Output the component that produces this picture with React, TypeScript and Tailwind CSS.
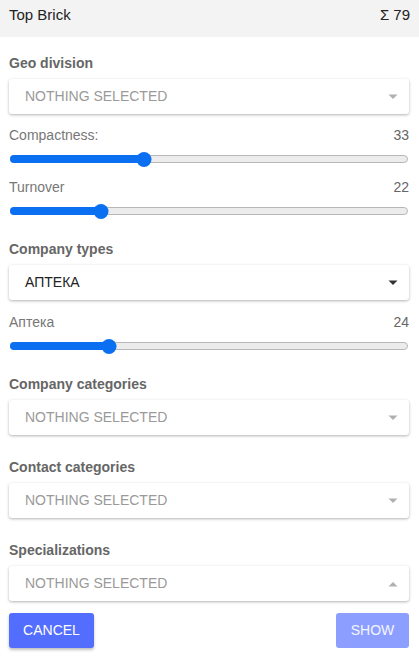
import React from "react";

const font = { fontFamily: '"Liberation Sans", Arial, sans-serif' };

function Arrow({ up = false, dark = false }: { up?: boolean; dark?: boolean }) {
  return (
    <svg width="10" height="6" viewBox="0 0 10 6" className="shrink-0">
      {up ? (
        <path d="M0.5 5.5 L5 1 L9.5 5.5 Z" fill={dark ? "#333" : "#b0b0b0"} />
      ) : (
        <path d="M0.5 0.5 L9.5 0.5 L5 5 Z" fill={dark ? "#333" : "#b0b0b0"} />
      )}
    </svg>
  );
}

function Select({ value, up = false }: { value?: string; up?: boolean }) {
  return (
    <div className="mt-[8px] h-[35px] bg-white rounded-[3px] shadow-[0_1px_3px_rgba(0,0,0,0.3)] flex items-center justify-between pl-[16px] pr-[11px]">
      {value ? (
        <span className="text-[14px] text-[#222]">{value}</span>
      ) : (
        <span className="text-[14px] text-[#9a9a9a]">NOTHING SELECTED</span>
      )}
      <Arrow up={up} dark={!!value} />
    </div>
  );
}

function Label({ text, mt }: { text: string; mt: string }) {
  return <div className={`${mt} text-[14px] leading-[16px] font-bold text-[#666]`}>{text}</div>;
}

function Slider({ label, value, mt }: { label: string; value: number; mt: string }) {
  const pos = `calc(8px + (100% - 16px) * ${value / 100})`;
  return (
    <div className={mt}>
      <div className="flex justify-between text-[14px] leading-[16px] text-[#777]">
        <span>{label}</span>
        <span className="text-[#666]">{value}</span>
      </div>
      <div className="mt-[8px] h-[16px] relative flex items-center pl-[1px] pr-[1px]">
        <div className="w-full h-[8px] rounded-full border border-[#b8b8b8] bg-[#ececec]" />
        <div className="absolute left-[1px] h-[8px] rounded-full bg-[#0b6ff2]" style={{ width: pos }} />
        <div
          className="absolute w-[15px] h-[15px] rounded-full bg-[#0b6ff2] -translate-x-1/2"
          style={{ left: pos }}
        />
      </div>
    </div>
  );
}

export default function App() {
  return (
    <div className="w-[419px] h-[661px] bg-white overflow-hidden" style={font}>
      <div className="h-[37px] bg-[#f3f3f3] px-[9px] pt-[6px] flex items-start justify-between text-[15px] leading-[17px] text-[#222]">
        <span>Top Brick</span>
        <span>Σ 79</span>
      </div>
      <div className="px-[9px] pr-[10px]">
        <Label text="Geo division" mt="mt-[18px]" />
        <Select />
        <Slider label="Compactness:" value={33} mt="mt-[13px]" />
        <Slider label="Turnover" value={22} mt="mt-[12px]" />
        <Label text="Company types" mt="mt-[22px]" />
        <Select value="АПТЕКА" />
        <Slider label="Аптека" value={24} mt="mt-[14px]" />
        <Label text="Company categories" mt="mt-[22px]" />
        <Select />
        <Label text="Contact categories" mt="mt-[24px]" />
        <Select />
        <Label text="Specializations" mt="mt-[24px]" />
        <Select up />
        <div className="mt-[12px] flex justify-between">
          <button className="h-[35px] w-[85px] rounded-[3px] bg-[#536dfe] text-white text-[14px] shadow-[0_2px_3px_rgba(0,0,0,0.25)]">
            CANCEL
          </button>
          <button className="h-[35px] w-[73px] rounded-[3px] bg-[#8c9eff] text-white/90 text-[14px]">
            SHOW
          </button>
        </div>
      </div>
    </div>
  );
}
